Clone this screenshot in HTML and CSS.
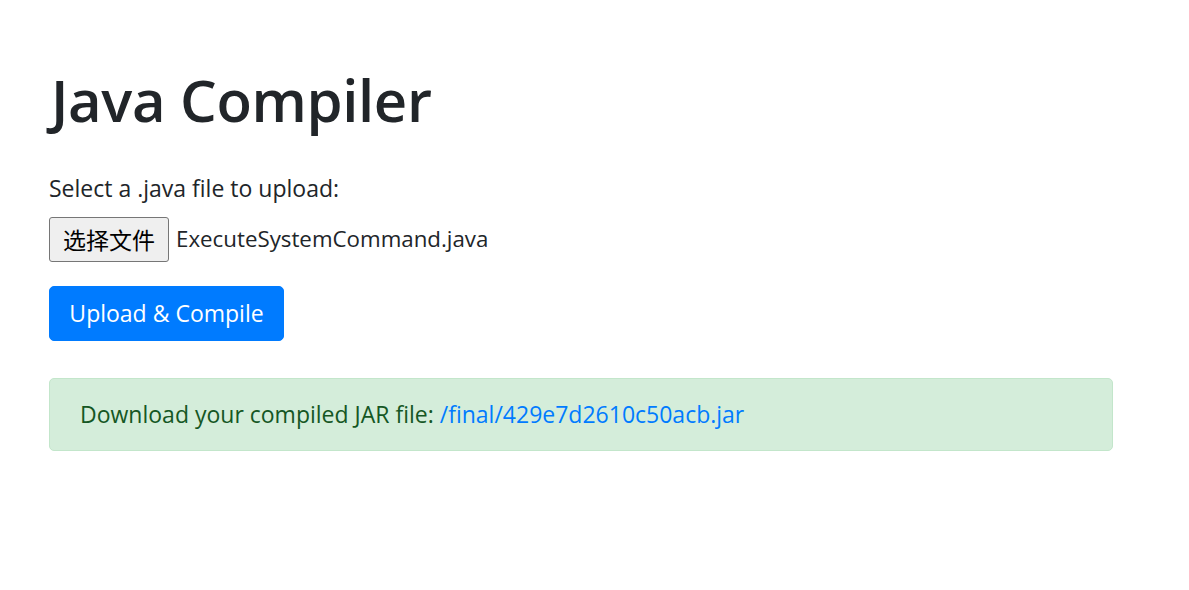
FILE: index.html
```html
<!DOCTYPE html>
<html lang="en">
<head>
<meta charset="utf-8">
<title>Java Compiler</title>
<link rel="stylesheet" href="styles.css">
</head>
<body>
<main class="container">
  <h1 class="title">Java Compiler</h1>
  <form class="upload-form">
    <label class="field-label">Select a .java file to upload:</label>
    <div class="file-row">
      <span class="file-btn">选择文件</span>
      <span class="file-name">ExecuteSystemCommand.java</span>
    </div>
    <button type="button" class="btn-primary">Upload &amp; Compile</button>
  </form>
  <div class="alert-success">Download your compiled JAR file: <a class="alert-link" href="#">/final/429e7d2610c50acb.jar</a></div>
</main>
</body>
</html>
```
FILE: styles.css
```css
* { box-sizing: border-box; }
html, body { margin: 0; padding: 0; background: #fff; }
body {
  font-family: "Open Sans", "Noto Sans", "Noto Sans CJK SC", sans-serif;
  font-size: 23px;
  line-height: 1.5;
  color: #212529;
}
.container {
  width: 1064px;
  margin-left: 49px;
  padding-top: 65px;
}
.title {
  margin: 0 0 36px 0;
  padding-left: 2px;
  font-size: 58px;
  font-weight: 600;
  line-height: 1.2;
  letter-spacing: -0.35px;
}
.upload-form {
  display: flex;
  flex-direction: column;
  align-items: flex-start;
}
.field-label { display: block; line-height: 34px; margin-bottom: 12px; }
.file-row {
  display: flex;
  align-items: center;
  gap: 7px;
  margin-bottom: 24px;
}
.file-btn {
  display: inline-flex;
  align-items: center;
  justify-content: center;
  width: 120px;
  height: 45px;
  font-family: "Noto Sans CJK SC", sans-serif;
  font-size: 23px;
  color: #000;
  background: #efefef;
  border: 1px solid #767676;
  border-radius: 3px;
}
.file-name { font-size: 22.3px; }
.btn-primary {
  width: 235px;
  height: 55px;
  font-family: inherit;
  font-size: 23px;
  color: #fff;
  background: #007bff;
  border: 1px solid #007bff;
  border-radius: 5px;
  padding: 0;
}
.alert-success {
  margin-top: 37px;
  height: 73px;
  padding: 0 30px;
  line-height: 71px;
  color: #155724;
  background: #d4edda;
  border: 1px solid #c3e6cb;
  border-radius: 5px;
}
.alert-link { color: #007bff; text-decoration: none; }
```
